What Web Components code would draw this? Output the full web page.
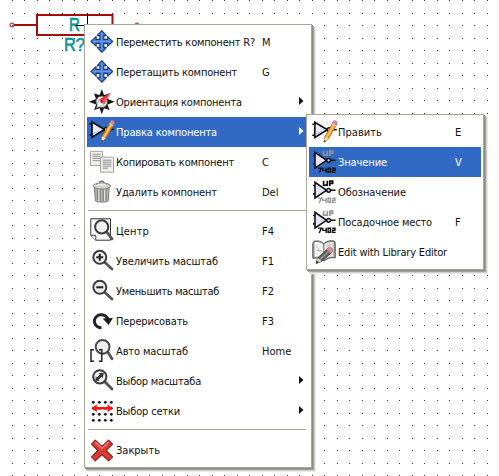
<!DOCTYPE html>
<html lang="ru">
<head>
<meta charset="utf-8">
<title>Schematic context menu</title>
<style>
html,body{margin:0;width:499px;height:476px;overflow:hidden;background:#fff}
</style>
</head>
<body>
<schematic-canvas>
  <context-menu style="--x:84px;--y:24px;--w:228px">
    <menu-row icon="move" w="139" key="M">Переместить компонент R?</menu-row>
    <menu-row icon="move" w="121" key="G">Перетащить компонент</menu-row>
    <menu-row icon="compass" w="126" sub>Ориентация компонента</menu-row>
    <menu-row icon="edit" w="101" sub active>Правка компонента</menu-row>
    <menu-row icon="copy" w="118" key="C">Копировать компонент</menu-row>
    <menu-row icon="trash" w="101" key="Del">Удалить компонент</menu-row>
    <menu-line></menu-line>
    <menu-row icon="center" w="33" key="F4">Центр</menu-row>
    <menu-row icon="zoomin" w="102" key="F1">Увеличить масштаб</menu-row>
    <menu-row icon="zoomout" w="103" key="F2">Уменьшить масштаб</menu-row>
    <menu-row icon="redraw" w="72" key="F3">Перерисовать</menu-row>
    <menu-row icon="auto" w="72" key="Home">Авто масштаб</menu-row>
    <menu-row icon="zoomsel" w="85" sub>Выбор масштаба</menu-row>
    <menu-row icon="grid" w="64" sub>Выбор сетки</menu-row>
    <menu-line></menu-line>
    <menu-row icon="close" w="44">Закрыть</menu-row>
  </context-menu>
  <context-menu style="--x:306px;--y:114px;--w:178px;--label:117px">
    <menu-row icon="edit2" w="44" key="E">Править</menu-row>
    <menu-row icon="value" w="49" key="V" active>Значение</menu-row>
    <menu-row icon="ref" w="68">Обозначение</menu-row>
    <menu-row icon="foot" w="94" key="F">Посадочное место</menu-row>
    <menu-row icon="book" w="109">Edit with Library Editor</menu-row>
  </context-menu>
</schematic-canvas>
<script>
const lens = (x, y, r, hx, hy, c = '#3c3c3c') => `
  <path d="M${x + r * .75} ${y + r * .75}L${hx} ${hy}" stroke="#555" stroke-width="2.8" stroke-linecap="round"/>
  <circle cx="${x}" cy="${y}" r="${r}" fill="#eef0f0" stroke="${c}" stroke-width="2"/>`;
const arrow4 = 'M15 3.6l4.6 5h-2.7v3.8h3.8V9.6l5.2 4.8-5.2 4.8v-2.8h-3.8v4h2.7L15 25.2l-4.6-4.8h2.7v-4H9.3v2.8l-5.2-4.8 5.2-4.8v2.8h3.8V8.6h-2.7z';
const gate = `
  <path d="M2.5 7h4M2.5 18h4M17 12.5h10" stroke="#111" stroke-width="1.6"/>
  <path d="M5 5v15.200L17.500 12.500z" fill="#e9e9ff" stroke="#111" stroke-width="1.7"/>
  <path d="M6 18.600v-3l7-2.200z" fill="#c4c4e6"/>
  <circle cx="19.3" cy="12.5" r="2" fill="#dde" stroke="#111" stroke-width="1.4"/>`;
const pencil = `<path d="M23.4 4.8l3.5 2.3-8.4 14.6-4.2 3.4.6-5.5z" fill="#f09b2c" stroke="#ac6022" stroke-width=".8"/><path d="M25 6.3l-8.5 14.5" stroke="#ffd36b" stroke-width="1.2"/><path d="M22.6 6.2l1-2.3c1.3-1.5 4.6.2 3.7 2.4l-1.2 2.2z" fill="#e8879b" stroke="#b55a6a" stroke-width=".6"/><path d="M22.4 6.4l3.7 2.3" stroke="#ccd" stroke-width="1.3"/><path d="M15 19.6l3.4 2-4.1 3.5z" fill="#f7dfb5"/><path d="M14.7 22.8l1.5.9-2 1.6z" fill="#222"/>`;
const tag = (up, num) => `<g transform="translate(.6 .9)">
  <path d="M3.4 7.6H6M3.4 16H6M20 12.4h6" stroke="#111" stroke-width="1.6"/>
  <path d="M5.4 4.4v15.600L17 12.4z" fill="#e4e4fa" stroke="#111" stroke-width="1.6"/>
  <circle cx="19" cy="12.4" r="1.900" fill="#dde" stroke="#111" stroke-width="1.5"/>
  <path d="M14 2.800v4.500h3.700V2.800M20.200 8V3.200h2.900v2.300h-2.600" fill="none" stroke="${up}" stroke-width="1.7"/>
  <path d="M8.3 20.2h3.4l-2 5M13.2 19.8v2.7h3.4M16.6 19.8v5.2M18.5 20.3h2.3v4.1h-2.3zM22.6 20.3h2.8v2.100h-2.5v2.100h3.2" fill="none" stroke="${num}" stroke-width="1.4"/></g>`;
const ICONS = {
  move: `<path d="${arrow4}" transform="translate(.6 1)" fill="#999" opacity=".55"/><path d="${arrow4}" transform="translate(-.2 0)" fill="#4a80d8" stroke="#1c3b78" stroke-width="1.1" stroke-linejoin="round"/><path d="M14.8 5.5v17.6M6 14.4h17.5" stroke="#7aa8ee" stroke-width="1" opacity=".7"/>`,
  compass: `<path d="M14.8 2l2.2 6 5.5-1.5-2 5.5 7.2 2.8-7.2 2.8 2 5.3-5.5-1.7-2.2 6-2.2-6-5.5 1.7 2-5.3-7.2-2.8L9 12 7 6.5 12.6 8z" fill="#151515"/><circle cx="14.7" cy="14.8" r="5.8" fill="#eee" stroke="#444" stroke-width=".8"/><path d="M12 12.5l5 5-7.4 3.4z" fill="#fff" stroke="#888" stroke-width=".6"/><path d="M12.3 12.6l11.4-7-6.300 11.6z" fill="#e22b32"/><path d="M23.7 5.6L14.6 15l2.3 2.2z" fill="#ff6060"/><circle cx="14.6" cy="14.8" r="1.2" fill="#911"/>`,
  edit: gate + pencil,
  edit2: `<g transform="translate(.8 .3)">${gate}${pencil}</g>`,
  copy: `<g stroke="#a3a39f" fill="#efefed"><path d="M3.5 4.3h12v14.2h-12z"/><path d="M5.5 7.3h8M5.5 9.4h8M5.5 11.5h8M5.5 13.6h8" stroke-width=".9" stroke="#8c8c88"/><path d="M13.5 10.2h13v15h-13z"/><path d="M15.7 13.2h8.7M15.7 15.2h8.7M15.7 17.2h8.7M15.7 19.2h8.7M15.7 21.2h5" stroke-width=".9" stroke="#858581"/></g>`,
  trash: `<path d="M7.4 10.5h14.8l-1 13.3c-2 1.8-10.8 1.8-12.8 0z" fill="#b4b4b0" stroke="#7d7d79"/><path d="M10.5 12v11.4M13.3 12v12M16.2 12v12M19 12v11.4" stroke="#85857f" stroke-width="1.2"/><path d="M11.9 12v12M17.6 12v12" stroke="#e8e8e5"/><ellipse cx="14.8" cy="9" rx="8.7" ry="3" fill="#d6d6d2" stroke="#7c7c78"/><path d="M9 8.2c1-3 10.5-3 11.5 0" fill="#eee" stroke="#8c8c88" stroke-width=".8"/><path d="M12.5 5.8c0-2.2 4.5-2.2 4.5 0" fill="none" stroke="#666" stroke-width="1.1"/>`,
  center: `<path d="M3.8 2.8h19.7v21.4H8.8l-5-4.8z" fill="#fff" stroke="#333" stroke-width="1"/><path d="M3.8 19.4h5v4.8" fill="#eee" stroke="#333" stroke-width=".9"/>` + lens(14.7, 10.9, 6.6, 25, 22.8),
  zoomin: lens(12.8, 11.3, 6.5, 25, 23) + '<path d="M9.3 11.3h7M12.8 7.8v7" stroke="#222" stroke-width="2"/>',
  zoomout: lens(12.8, 11.3, 6.5, 25, 23) + '<path d="M9.3 11.3h7" stroke="#222" stroke-width="2.1"/>',
  redraw: `<path d="M14.5 21.7A7 6.5 0 1 1 21.2 14" fill="none" stroke="#222" stroke-width="3"/><path d="M15.7 12.4l10.2-.5-4.3 7z" fill="#1c1c1c"/>`,
  auto: lens(15.6, 10.8, 6.9, 25, 22.8, '#4a4a4a') + '<path d="M7 13.8H4v11.5h3M11.8 13.8h3v11.5h-3" fill="none" stroke="#222" stroke-width="1.5"/>',
  zoomsel: lens(12.8, 10.8, 6.6, 25, 23) + '<path d="M16.8 6.8l-1 5.2-1.3-1.3-3 3 1.2 1.2-4.2-.1.2-4.6 1.2 1.3 3-3-1.3-1.2z" fill="#333"/>',
  grid: `<g fill="#111">${[6.3, 12.3, 18.3, 24.3].map(y => [6.3, 12.3, 18.3, 24.3].map(x => `<circle cx="${x}" cy="${y}" r="1.4"/>`).join('')).join('')}</g><path d="M4.8 12.3l5-4v2.8h10.8V8.3l5 4-5 4v-2.8H9.8v2.8z" fill="#f51515"/>`,
  close: `<path d="M8.3 5.2l6.6 6.2 6.7-6.2 4 4-6.5 6.3 6.5 6.3-4 4-6.7-6.3-6.6 6.3-3.8-4 6.4-6.3-6.4-6.3z" fill="#dc3b35" stroke="#8d1d1b" stroke-width="1.1" stroke-linejoin="round"/><path d="M8.3 7l6.6 6.4L21.6 7" fill="none" stroke="#f68a80" stroke-width="1.3"/>`,
  value: tag('#8d9198', '#111'),
  ref: tag('#111', '#999'),
  foot: tag('#999', '#111'),
  book: `<path d="M3.8 6.3l1.2-2c4-1 7 0 9.8 2.4C18 4 21.5 3.2 25 4l1.2 2v15c-4-.8-7.5 0-11 3-3.3-2.600-7-3.5-11.400-2.700z" fill="#999" stroke="#555"/><path d="M5.5 5.2c4-.7 6.5.3 9.3 2.5v14.6c-3-2.2-6-2.9-9.3-2.3z" fill="#f4f4f2"/><path d="M14.8 7.7c2.9-2.4 6-3.2 9.700-2.5v14.6c-3.6-.5-6.500.3-9.700 2.5z" fill="#e4e4e0"/><path d="M14.8 7v15.5" stroke="#777"/><path d="M7.5 8.5l4 7M7.5 13.5h5M18 9l4-1.5" stroke="#bbb"/><path d="M18.6 11.8l4 3.8-10 8.9-5.5 2 1.6-5.7z" fill="#666" stroke="#333" stroke-width=".8"/><path d="M20.3 13.6L10.5 23" stroke="#999" stroke-width="1.1"/><path d="M17.7 12.6l1.8-2c2-1.4 5.2 1.5 3.9 3.8l-2 2.2z" fill="#d98aa5" stroke="#a65574" stroke-width=".6"/><path d="M8.7 20.8l3.8 3.7-5.4 2z" fill="#e9dcae"/><path d="M7.8 23.6l2 2-2.8 1z" fill="#111"/>`
};

class SchematicCanvas extends HTMLElement {
  connectedCallback() {
    let dots = '';
    for (let j = -1; j < 38; j++) for (let i = 0; i < 39; i++)
      dots += `M${Math.floor(12 + 12.5 * i)} ${Math.floor(13 + 12.5 * j)}h1v1h-1z`;
    this.attachShadow({mode: 'open'}).innerHTML = `
      <style>
        :host{display:block;position:relative;width:499px;height:476px;overflow:hidden;background:#fff}
        svg{display:block}
        text{font:18.5px "Liberation Sans",sans-serif;fill:#0a9696;stroke:#0a9696;stroke-width:.6px}
      </style>
      <svg width="499" height="476" fill="none">
        <path d="${dots}" fill="#333" shape-rendering="crispEdges"/>
        <g stroke="#a30d0d"><path d="M37 15h75.500v20H37zM14 25h23" stroke-width="2"/>
        <circle cx="12" cy="25" r="2"/><circle cx="137" cy="25" r="2"/></g>
        <text x="69" y="31" textLength="11" lengthAdjust="spacingAndGlyphs">R</text>
        <text x="64" y="51" textLength="21" lengthAdjust="spacingAndGlyphs">R?</text>
        <path d="M87.500 13v12M76 25.500h9" stroke="#000"/>
      </svg>
      <slot></slot>`;
  }
}

class ContextMenu extends HTMLElement {
  connectedCallback() {
    this.attachShadow({mode: 'open'}).innerHTML = `
      <style>
        :host{display:flex;flex-direction:column;position:absolute;left:var(--x);top:var(--y);width:var(--w);
          box-sizing:border-box;padding:2px;border:1px solid #aca899;background:#fff;
          box-shadow:1px 1px 0 #8c8b85,2px 2px 0 #a3a29e,3px 3px 0 #cfcfcd,4px 4px 1px #ececec}
      </style><slot></slot>`;
  }
}

class MenuLine extends HTMLElement {
  connectedCallback() {
    this.attachShadow({mode: 'open'}).innerHTML = `
      <style>:host{display:block;height:9px;padding:3px 3px 0 1px;box-sizing:border-box}
      div{height:1px;background:#aca899}</style><div></div>`;
  }
}

class MenuRow extends HTMLElement {
  connectedCallback() {
    const key = this.getAttribute('key');
    this.attachShadow({mode: 'open'}).innerHTML = `
      <style>
        :host{display:grid;grid-template-columns:29px var(--label,146px) 1fr 10px;align-items:center;height:30px;
          color:#111;font:11px/14px "DejaVu Sans Condensed","DejaVu Sans",sans-serif;font-stretch:condensed;white-space:nowrap}
        :host([active]){background:#316ac5;color:#fff}
        .icon{width:30px;height:30px}
        .label{grid-column:2;padding-top:2px}
        .key{grid-column:3;padding-top:2px}
        .more{grid-column:4;width:5px;height:8px;margin-top:-2px;fill:currentColor}
      </style>
      <svg class="icon" viewBox="0 0 30 30" fill="none">${ICONS[this.getAttribute('icon')]}</svg>
      <span class="label"><slot></slot></span>
      ${key ? `<span class="key">${key}</span>` : ''}
      ${this.hasAttribute('sub') ? '<svg class="more" viewBox="0 0 5 8"><path d="M0 0l4.500 4L0 8z"/></svg>' : ''}`;
    this.fit();
  }
  /* Tracks the label to the advance width given in the w attribute. */
  fit() {
    const range = document.createRange();
    range.selectNodeContents(this);
    const natural = range.getBoundingClientRect().width;
    const label = this.shadowRoot.querySelector('.label');
    label.style.letterSpacing = (this.getAttribute('w') - natural) / this.textContent.length + 'px';
  }
}
customElements.define('schematic-canvas', SchematicCanvas);
customElements.define('context-menu', ContextMenu);
customElements.define('menu-line', MenuLine);
customElements.define('menu-row', MenuRow);
</script>
</body>
</html>
